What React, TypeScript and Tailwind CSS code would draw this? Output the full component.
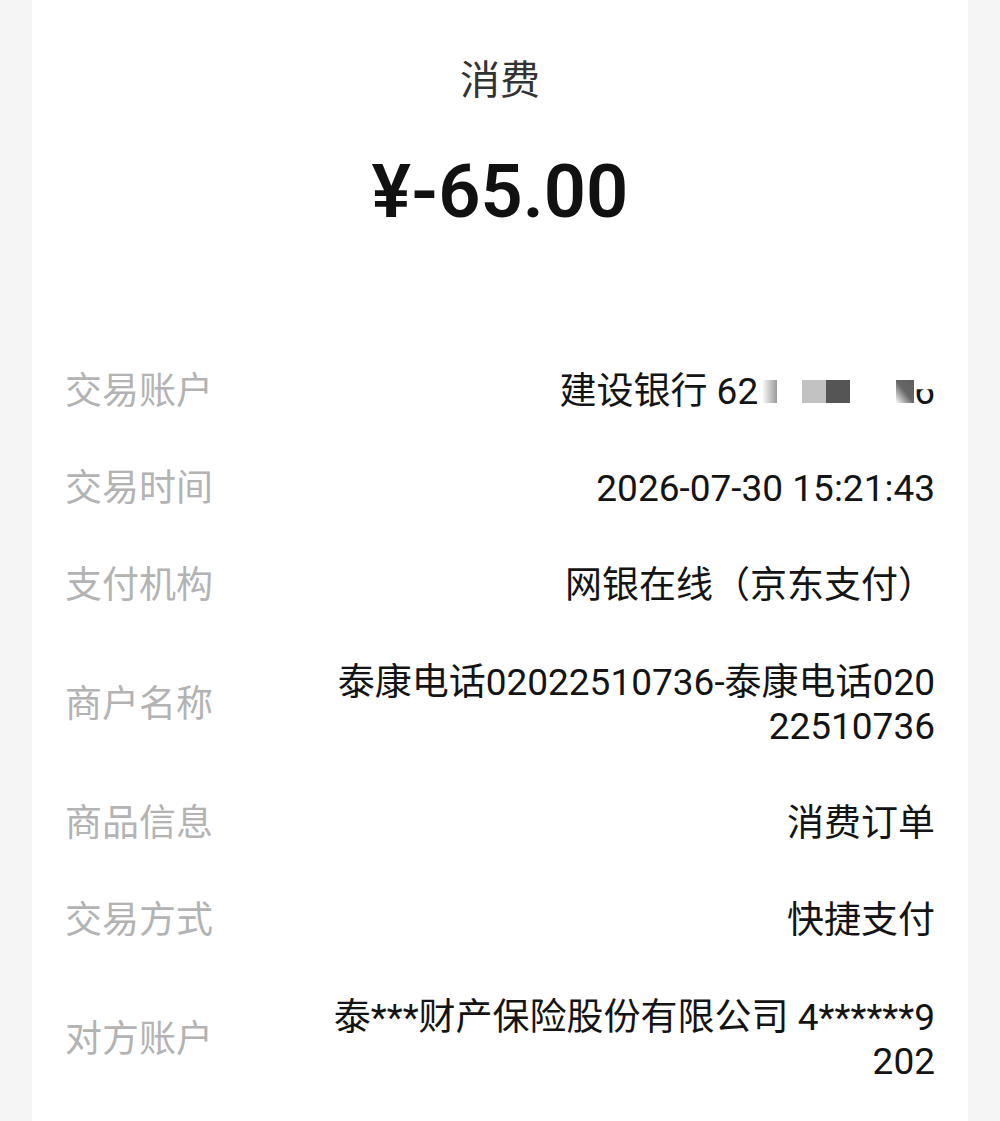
import React from "react";

type Row = {
  label: string;
  value: React.ReactNode;
};

const FONT = "font-['Roboto','Noto_Sans_CJK_SC',sans-serif]";

function MaskedCard() {
  // bank card number, mosaic-blurred in the original
  return (
    <span className="inline-flex items-center">
      <span>建设银行 62</span>
      <span className="ml-[4px] h-[23px] w-[15px] bg-gradient-to-r from-white to-[#9a9a9a]" />
      <span className="ml-[25px] h-[23px] w-[24px] bg-[#c2c2c2]" />
      <span className="h-[23px] w-[24px] bg-[#555555]" />
      <span className="ml-[46px] h-[23px] w-[18px] bg-gradient-to-tr from-white via-[#666666] to-[#5f5f5f]" />
      <span className="[clip-path:inset(45%_0_0_0)]">6</span>
    </span>
  );
}

const ROWS: Row[] = [
  { label: "交易账户", value: <MaskedCard /> },
  { label: "交易时间", value: "2026-07-30 15:21:43" },
  { label: "支付机构", value: "网银在线（京东支付）" },
  { label: "商户名称", value: "泰康电话02022510736-泰康电话02022510736" },
  { label: "商品信息", value: "消费订单" },
  { label: "交易方式", value: "快捷支付" },
  { label: "对方账户", value: "泰***财产保险股份有限公司 4******9202" },
];

export default function App() {
  return (
    <div className={`min-h-[1121px] bg-[#f5f5f5] px-[32px] ${FONT}`}>
      <div className="min-h-[1121px] bg-white px-[33px]">
        <div className="pt-[57px] text-center text-[40px] leading-[48px] text-[#333333]">消费</div>
        <div className="mt-[43px] text-center text-[74px] font-semibold leading-[88px] text-[#111111]">
          ¥-65.00
        </div>

        <div className="mt-[107px]">
          {ROWS.map((r) => (
            <div key={r.label} className="flex items-center py-[26.5px]">
              <div className="w-[260px] shrink-0 text-[37px] leading-[44px] text-[#b3b3b3]">{r.label}</div>
              <div className="flex-1 break-all text-right text-[37px] leading-[44px] text-[#141414]">
                {r.value}
              </div>
            </div>
          ))}
        </div>
      </div>
    </div>
  );
}
